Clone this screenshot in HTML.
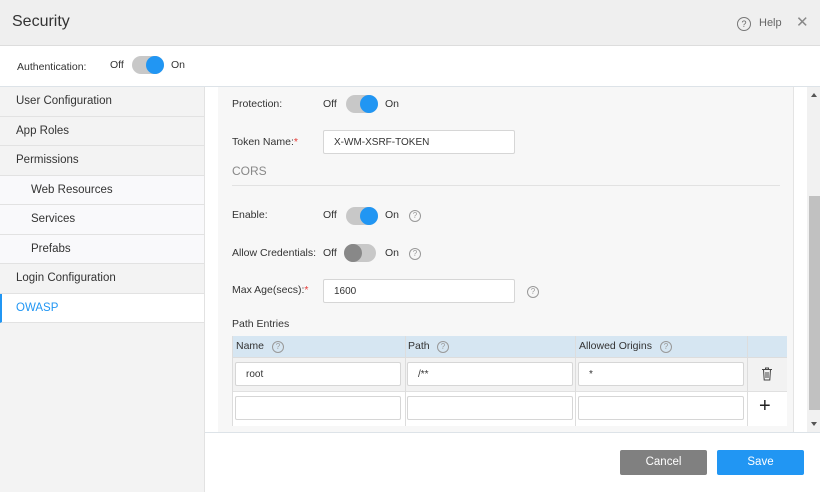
<!DOCTYPE html>
<html><head><style>
*{box-sizing:border-box;margin:0;padding:0}
body{width:820px;height:492px;overflow:hidden;font-family:"Liberation Sans",Arial,sans-serif;font-size:11px;color:#333;background:#fff;position:relative}
.a{position:absolute}
.hdr{left:0;top:0;width:820px;height:46px;background:#efefef;border-bottom:1px solid #ddd}
.side{left:0;top:87px;width:205px;height:405px;background:#f3f3f3;border-right:1px solid #e2e2e2}
.it{height:29.5px;line-height:29px;padding-left:16px;border-bottom:1px solid #e2e2e2;font-size:11.5px;color:#333}
.sub{padding-left:31px;background:#f9f9fb}
.act{background:#fff;color:#2196f3;border-left:2px solid #2196f3;padding-left:14px}
.tg{width:30px;height:18px;border-radius:9px;background:#c8c8c8}
.tg i{position:absolute;top:0;width:18px;height:18px;border-radius:9px;background:#2196f3}
.lbl{font-size:10.5px;color:#333}
.inp{background:#fff;border:1px solid #d6d6d6;border-radius:2px;height:24px;line-height:23px;padding-left:10px;font-size:10px}
.q{width:12px;height:12px;border:1px solid #999;border-radius:50%;font-size:8px;color:#999;text-align:center;line-height:10px}
.req{color:#e53935}
.btn{height:25px;line-height:25px;text-align:center;color:#fff;font-size:11.5px;border-radius:2px}
.th{font-size:10.5px;color:#333}
</style></head><body>
<div class="a hdr"></div>
<div class="a" style="left:12px;top:13px;font-size:16px;color:#333">Security</div>
<div class="a q" style="left:737px;top:17px;width:14px;height:14px;line-height:12px;font-size:9px;color:#666;border-color:#777">?</div>
<div class="a" style="left:759px;top:17px;font-size:11px;color:#666">Help</div>
<div class="a" style="left:796px;top:13px;font-size:15px;color:#888">✕</div>
<div class="a" style="left:0;top:86px;width:820px;border-top:1px solid #dde3e8"></div>
<div class="a lbl" style="left:17px;top:61px">Authentication:</div>
<div class="a lbl" style="left:110px;top:59px">Off</div>
<div class="a tg" style="left:132px;top:56px;width:32px"><i style="left:14px"></i></div>
<div class="a lbl" style="left:171px;top:59px">On</div>

<div class="a side">
<div class="it">User Configuration</div>
<div class="it">App Roles</div>
<div class="it">Permissions</div>
<div class="it sub">Web Resources</div>
<div class="it sub">Services</div>
<div class="it sub">Prefabs</div>
<div class="it">Login Configuration</div>
<div class="it act">OWASP</div>
</div>

<div class="a" style="left:218px;top:87px;width:576px;height:346px;background:#f7f7f7;border-right:1px solid #e4e4e4"></div>
<div class="a" style="left:807px;top:87px;width:13px;height:346px;background:#f1f1f1"></div>
<div class="a" style="left:809px;top:196px;width:11px;height:214px;background:#c1c1c1"></div>
<div class="a" style="left:811px;top:93px;border:3px solid transparent;border-bottom:4px solid #555;border-top:0"></div>
<div class="a" style="left:811px;top:422px;border:3px solid transparent;border-top:4px solid #555;border-bottom:0"></div>
<div class="a" style="left:205px;top:432px;width:615px;border-top:1px solid #dde3e8"></div>

<div class="a lbl" style="left:232px;top:98px">Protection:</div>
<div class="a lbl" style="left:323px;top:98px">Off</div>
<div class="a tg" style="left:346px;top:95px;width:32px"><i style="left:14px"></i></div>
<div class="a lbl" style="left:385px;top:98px">On</div>

<div class="a lbl" style="left:232px;top:136px">Token Name:<span class="req">*</span></div>
<div class="a inp" style="left:323px;top:130px;width:192px">X-WM-XSRF-TOKEN</div>
<div class="a" style="left:232px;top:164px;font-size:12px;color:#888">CORS</div>
<div class="a" style="left:232px;top:185px;width:548px;border-top:1px solid #e2e2e2"></div>

<div class="a lbl" style="left:232px;top:209px">Enable:</div>
<div class="a lbl" style="left:323px;top:209px">Off</div>
<div class="a tg" style="left:346px;top:207px;width:32px"><i style="left:14px"></i></div>
<div class="a lbl" style="left:385px;top:209px">On</div>
<div class="a q" style="left:409px;top:210px">?</div>

<div class="a lbl" style="left:232px;top:247px">Allow Credentials:</div>
<div class="a lbl" style="left:323px;top:247px">Off</div>
<div class="a tg" style="left:344px;top:244px;width:32px"><i style="left:0;background:#888"></i></div>
<div class="a lbl" style="left:385px;top:247px">On</div>
<div class="a q" style="left:409px;top:248px">?</div>

<div class="a lbl" style="left:232px;top:284px">Max Age(secs):<span class="req">*</span></div>
<div class="a inp" style="left:323px;top:279px;width:192px">1600</div>
<div class="a q" style="left:527px;top:286px">?</div>

<div class="a lbl" style="left:232px;top:318px">Path Entries</div>
<div class="a" style="left:232px;top:336px;width:555px;height:90px;background:#f2f2f2;border-left:1px solid #ddd">
 <div class="a" style="left:0;top:0;width:554px;height:21px;background:#d6e6f2"></div>
 <div class="a" style="left:0;top:21px;width:554px;border-top:1px solid #ddd"></div>
 <div class="a" style="left:0;top:55px;width:554px;border-top:1px solid #e0e0e0;background:#fff;height:35px"></div>
 <div class="a" style="left:172px;top:0;height:90px;border-left:1px solid #ddd"></div>
 <div class="a" style="left:342px;top:0;height:90px;border-left:1px solid #ddd"></div>
 <div class="a" style="left:514px;top:0;height:90px;border-left:1px solid #ddd"></div>
</div>
<div class="a th" style="left:236px;top:340px">Name</div>
<div class="a q" style="left:272px;top:341px">?</div>
<div class="a th" style="left:408px;top:340px">Path</div>
<div class="a q" style="left:437px;top:341px">?</div>
<div class="a th" style="left:579px;top:340px">Allowed Origins</div>
<div class="a q" style="left:660px;top:341px">?</div>
<div class="a inp" style="left:235px;top:362px;width:166px">root</div>
<div class="a inp" style="left:407px;top:362px;width:166px">/**</div>
<div class="a inp" style="left:578px;top:362px;width:166px">*</div>
<div class="a inp" style="left:235px;top:396px;width:166px"></div>
<div class="a inp" style="left:407px;top:396px;width:166px"></div>
<div class="a inp" style="left:578px;top:396px;width:166px"></div>
<svg class="a" style="left:761px;top:367px" width="12" height="14" viewBox="0 0 12 14"><path d="M1 2.5h10M4.5 2.5V1h3v1.5M2.5 2.5l.7 10.5h5.6l.7-10.5M5 5v6M7 5v6" fill="none" stroke="#444" stroke-width="1"/></svg>
<div class="a" style="left:759px;top:395px;font-size:20px;color:#222;line-height:22px">+</div>

<div class="a btn" style="left:620px;top:450px;width:87px;background:#808080">Cancel</div>
<div class="a btn" style="left:717px;top:450px;width:87px;background:#2196f3">Save</div>
</body></html>
